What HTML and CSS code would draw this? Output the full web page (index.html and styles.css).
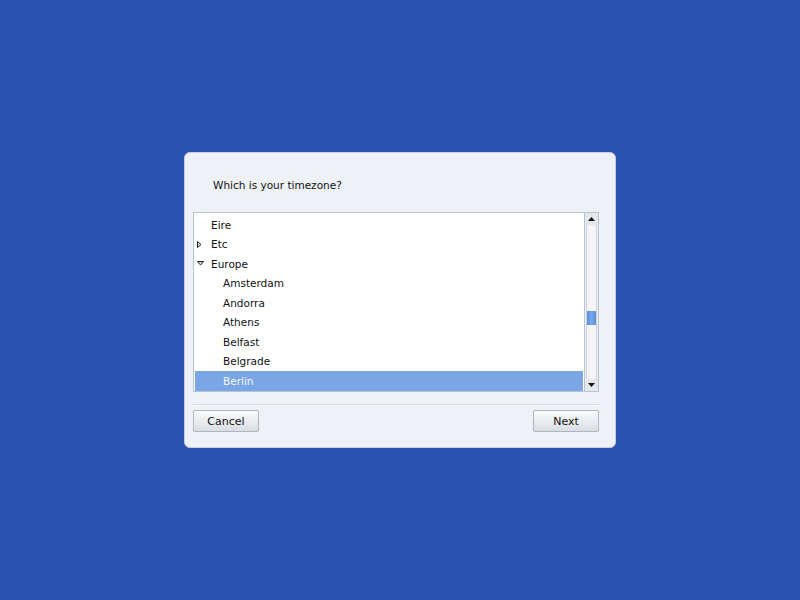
FILE: index.html
```html
<!DOCTYPE html>
<html>
<head>
<meta charset="utf-8">
<link rel="stylesheet" href="styles.css">
</head>
<body>
<div class="dialog">
  <div class="title">Which is your timezone?</div>
  <div class="list">
    <div class="tree">
      <div class="row"><span class="exp"></span><span class="label">Eire</span></div>
      <div class="row"><span class="exp"><svg width="7" height="9" viewBox="0 0 7 9"><path d="M1.5 1.5 L5 4.5 L1.5 7.5 Z" fill="#d8dde4" stroke="#222" stroke-width="1"/></svg></span><span class="label">Etc</span></div>
      <div class="row"><span class="exp"><svg width="9" height="7" viewBox="0 0 9 7"><path d="M1.5 1.5 L7.5 1.5 L4.5 5 Z" fill="#d8dde4" stroke="#222" stroke-width="1"/></svg></span><span class="label">Europe</span></div>
      <div class="row child"><span class="label">Amsterdam</span></div>
      <div class="row child"><span class="label">Andorra</span></div>
      <div class="row child"><span class="label">Athens</span></div>
      <div class="row child"><span class="label">Belfast</span></div>
      <div class="row child"><span class="label">Belgrade</span></div>
      <div class="row child selected"><span class="label">Berlin</span></div>
    </div>
    <div class="scrollbar">
      <div class="sbtn"><svg width="7" height="4" viewBox="0 0 7 4"><path d="M3.5 0 L7 4 L0 4 Z" fill="#111"/></svg></div>
      <div class="track"><div class="thumb"></div></div>
      <div class="sbtn"><svg width="7" height="4" viewBox="0 0 7 4"><path d="M0 0 L7 0 L3.5 4 Z" fill="#111"/></svg></div>
    </div>
  </div>
  <div class="sep"></div>
  <div class="buttons">
    <div class="btn">Cancel</div>
    <div class="btn">Next</div>
  </div>
</div>
</body>
</html>
```
FILE: styles.css
```css
html, body {
  margin: 0;
  padding: 0;
}
body {
  width: 800px;
  height: 600px;
  background: #2852af;
  display: flex;
  align-items: center;
  justify-content: center;
  font-family: "DejaVu Sans", sans-serif;
  font-size: 10.5px;
  color: #111;
}
.dialog {
  width: 432px;
  height: 296px;
  box-sizing: border-box;
  background: #eef1f6;
  border: 1px solid #c6cfdc;
  border-radius: 6px;
  padding: 0 16px 0 8px;
  display: flex;
  flex-direction: column;
}
.title {
  margin-top: 26px;
  height: 13px;
  line-height: 13px;
  padding-left: 20px;
}
.list {
  margin-top: 20px;
  height: 180px;
  box-sizing: border-box;
  border: 1px solid #b9c4d1;
  background: #fff;
  display: flex;
}
.tree {
  flex: 1;
  padding: 2px 1px 0 1px;
  overflow: hidden;
}
.row {
  height: 19.5px;
  display: flex;
  align-items: center;
}
.exp {
  width: 16px;
  box-sizing: border-box;
  padding-left: 1px;
  display: flex;
  align-items: center;
  justify-content: flex-start;
}
.child .label {
  padding-left: 28px;
}
.selected {
  background: #7aa6e6;
  color: #f4f8ff;
}
.scrollbar {
  width: 13px;
  border-left: 1px solid #b9c4d1;
  background: #eef1f6;
  display: flex;
  flex-direction: column;
}
.sbtn {
  height: 12px;
  display: flex;
  align-items: center;
  justify-content: center;
  background: #e4e8ee;
}
.track {
  flex: 1;
  margin: 0 1px;
  border-left: 1px solid #c9d1dc;
  border-right: 1px solid #c9d1dc;
  background: #f3f5f8;
}
.thumb {
  margin-top: 86px;
  height: 14px;
  background: linear-gradient(to right, #5d8ddc, #7aa6ea 50%, #5d8ddc);
}
.sep {
  margin-top: 12px;
  height: 1px;
  background: #d6dce5;
  border-bottom: 1px solid #f8f9fb;
}
.buttons {
  margin-top: 4px;
  display: flex;
  justify-content: space-between;
}
.btn {
  width: 66px;
  height: 22px;
  box-sizing: border-box;
  border: 1px solid #aeb6c0;
  border-radius: 2px;
  background: linear-gradient(to bottom, #fafbfc, #e6e9ed 60%, #d9dde3);
  display: flex;
  align-items: center;
  justify-content: center;
  font-size: 11px;
  color: #111;
}
```
